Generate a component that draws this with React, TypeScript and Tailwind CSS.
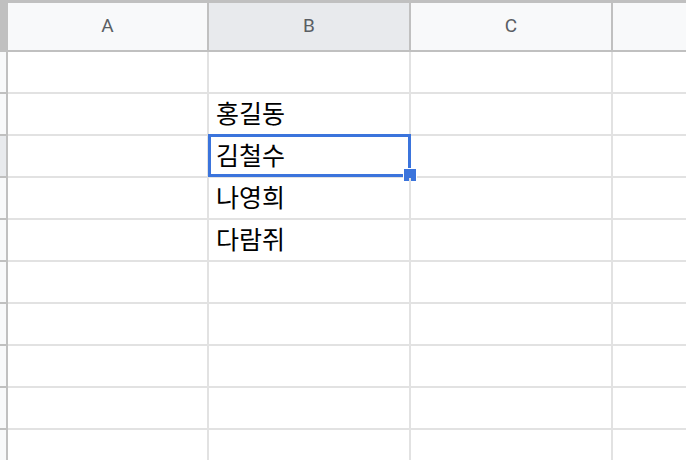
const ROWS = ["", "홍길동", "김철수", "나영희", "다람쥐", "", "", "", "", ""];
const SELECTED = 2;

function HeaderCell({ label, active, w }: { label: string; active?: boolean; w: string }) {
  return (
    <div
      className={`${w} h-full flex items-center justify-center border-r-2 border-[#c0c0c0] text-[19px] text-[#5a5e63] ${
        active ? "bg-[#e8eaed]" : "bg-[#f8f9fa]"
      }`}
    >
      {label}
    </div>
  );
}

export default function App() {
  return (
    <div
      className="w-[686px] h-[460px] overflow-hidden bg-white"
      style={{ fontFamily: "Roboto, 'Noto Sans CJK KR', sans-serif" }}
    >
      <div className="h-[3px] bg-[#c0c0c0]" />

      {/* column header */}
      <div className="h-[49px] flex border-b-2 border-[#c0c0c0]">
        <div className="w-[8px] h-full bg-[#c0c0c0]" />
        <HeaderCell label="A" w="w-[201px]" />
        <HeaderCell label="B" w="w-[202px]" active />
        <HeaderCell label="C" w="w-[202px]" />
        <div className="flex-1 h-full bg-[#f8f9fa]" />
      </div>

      {ROWS.map((name, i) => (
        <div key={i} className="h-[42px] flex">
          <div
            className={`w-[6px] h-full border-b-2 border-[#c0c0c0] ${
              i === SELECTED ? "bg-[#e8eaed]" : "bg-[#f8f9fa]"
            }`}
          />
          <div className="w-[2px] h-full bg-[#c0c0c0]" />
          <div className="w-[201px] h-full border-r-2 border-b-2 border-[#e2e2e2]" />
          <div className="relative w-[202px] h-full border-r-2 border-b-2 border-[#e2e2e2] flex items-center pl-[7px] pb-[4px]">
            <span
              className="text-[25px] text-black leading-none"
              style={{ fontFamily: "'Noto Sans CJK KR', sans-serif" }}
            >
              {name}
            </span>
            {i === SELECTED && (
              <>
                <div className="absolute left-[-1px] top-[-2px] w-[203px] h-[43px] border-[3px] border-[#3b74dc]" />
                <div className="absolute left-[194px] top-[32px] w-[14px] h-[14px] bg-[#3b74dc] border border-white" />
              </>
            )}
          </div>
          <div className="w-[202px] h-full border-r-2 border-b-2 border-[#e2e2e2]" />
          <div className="flex-1 h-full border-b-2 border-[#e2e2e2]" />
        </div>
      ))}
    </div>
  );
}
